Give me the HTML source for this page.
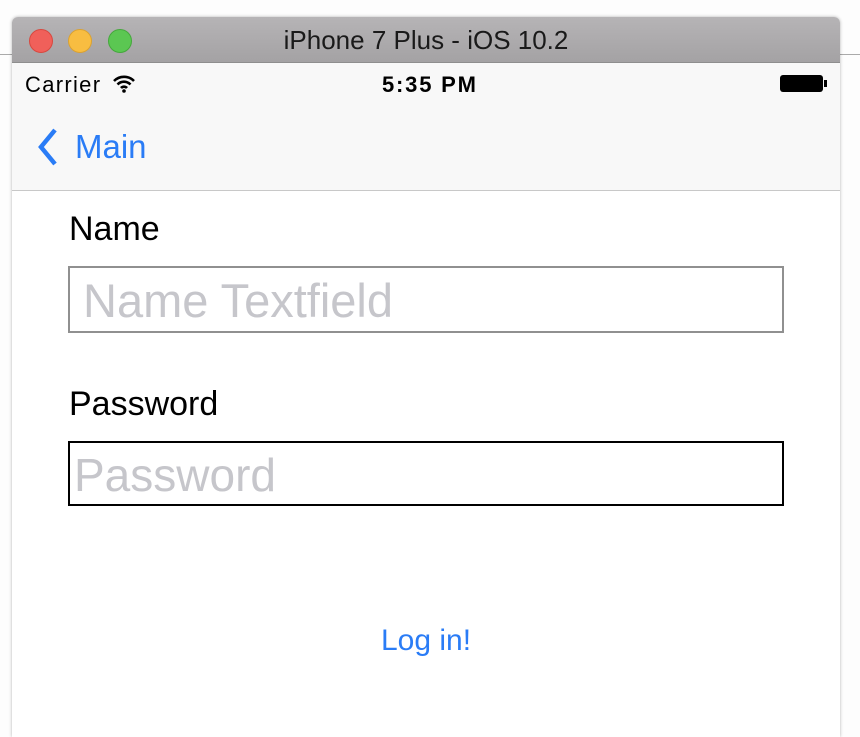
<!DOCTYPE html>
<html><head><meta charset="utf-8"><style>
body{margin:0;width:860px;height:718px;background:#fdfdfd;position:relative;overflow:hidden;font-family:"Liberation Sans",sans-serif}
.bgline{position:absolute;left:0;top:54px;width:860px;height:1px;background:#aaa}
.win{position:absolute;left:12px;top:17px;width:828px;height:720px;background:#fff;border-radius:6px 6px 0 0;overflow:hidden;box-shadow:0 0 3px rgba(0,0,0,.3)}
.title{height:45px;background:linear-gradient(#b6b4b6,#a4a2a4);border-bottom:1px solid #8e8e8e;text-align:center;line-height:47px;font-size:26px;color:#1a1a1a}
.dot{position:absolute;top:12px;width:22px;height:22px;border-radius:50%}
.status{position:absolute;top:46px;left:0;width:828px;height:127px;background:#f8f8f8;border-bottom:1px solid #c8c8c8}
.t{position:absolute;font-size:22px}
.lbl{position:absolute;left:57px;font-size:34px;color:#000}
.field{position:absolute;left:56px;width:716px;height:67px;box-sizing:border-box;color:#c6c6cb;padding-left:13px;line-height:66px}
</style></head><body>
<div class="bgline"></div>
<div class="win">
<div class="title">iPhone 7 Plus - iOS 10.2</div>
<div class="dot" style="left:17px;background:#f0605a;border:1px solid #d8483f"></div>
<div class="dot" style="left:56px;background:#f8bd41;border:1px solid #dba230"></div>
<div class="dot" style="left:96px;background:#5bc752;border:1px solid #45a83c"></div>
<div class="status">
<div class="t" style="left:13px;top:9px;letter-spacing:1.3px">Carrier</div>
<svg style="position:absolute;left:100px;top:12px" width="24" height="18" viewBox="0 0 24 18"><path d="M2 6a14 14 0 0 1 20 0M5.5 9.5a9 9 0 0 1 13 0M9 13a4 4 0 0 1 6 0" stroke="#000" stroke-width="2.6" fill="none"/><circle cx="12" cy="16" r="1.8"/></svg>
<div class="t" style="left:370px;top:9px;font-weight:bold;letter-spacing:1.8px">5:35 PM</div>
<div style="position:absolute;left:768px;top:12px;width:43px;height:17px;background:#000;border-radius:3px"></div>
<div style="position:absolute;left:812px;top:17px;width:3px;height:7px;background:#000"></div>
<svg style="position:absolute;left:24px;top:64px" width="22" height="40" viewBox="0 0 22 40"><path d="M19 3L5 20l14 17" stroke="#2a7cf6" stroke-width="4.5" fill="none"/></svg>
<div style="position:absolute;left:63px;top:65px;font-size:33px;color:#2a7cf6">Main</div>
</div>
<div class="lbl" style="top:193px">Name</div>
<div class="field" style="top:249px;border:2px solid #909090;font-size:47px">Name Textfield</div>
<div class="lbl" style="top:368px">Password</div>
<div class="field" style="top:424px;border:2px solid #000;height:65px;line-height:64px;padding-left:4px;font-size:46px">Password</div>
<div style="position:absolute;left:369px;top:607px;font-size:30px;color:#2a7cf6">Log in!</div>
</div>
</body></html>
